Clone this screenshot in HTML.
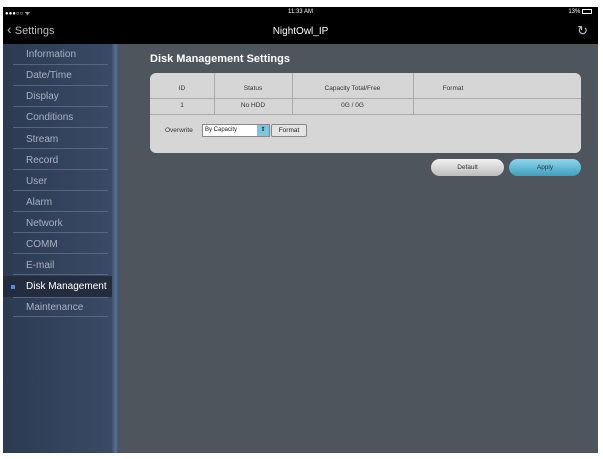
<!DOCTYPE html>
<html><head><style>
*{margin:0;padding:0;box-sizing:border-box}
body{width:603px;height:459px;background:#fff;position:relative;overflow:hidden;font-family:"Liberation Sans",sans-serif}
.a{position:absolute}
#top{left:3px;top:7px;width:595px;height:37px;background:#000;color:#fff}
#side{left:3px;top:44px;width:109px;height:409px;background:linear-gradient(90deg,#2c3a52,#34445e 60%,#3a4a66)}
#div{left:112px;top:44px;width:7px;height:409px;background:linear-gradient(90deg,#3d5070,#5a6e90,#3d5070)}
#main{left:119px;top:44px;width:479px;height:409px;background:#4f555c}
.it{position:absolute;left:23px;font-size:10px;color:#a9b1c0}
.ln{position:absolute;left:10px;width:95px;height:1px;background:#56667f}
#panel{left:150px;top:73px;width:431px;height:80px;background:#d6d6d6;border-radius:6px}
.th{position:absolute;font-size:6.5px;color:#333;text-align:center}
.btn{position:absolute;top:159px;height:17px;border-radius:9px;font-size:6.5px;text-align:center;line-height:17px;color:#333}
</style></head><body>
<div class="a" id="top">
<div class="a" style="left:2px;top:2px;font-size:6px;">●●●○○ ᯤ</div>
<div class="a" style="left:0;width:595px;top:2px;font-size:6px;text-align:center">11:33 AM</div>
<div class="a" style="right:6px;top:2px;font-size:6px;">13% <span style="display:inline-block;width:10px;height:5px;border:1px solid #fff;vertical-align:middle"></span></div>
<div class="a" style="left:4px;top:17px;font-size:11px;color:#bbb"><span style="font-size:14px;line-height:10px">‹</span> Settings</div>
<div class="a" style="left:0;width:595px;top:19px;font-size:10px;text-align:center">NightOwl_IP</div>
<div class="a" style="right:10px;top:16px;font-size:13px;color:#ccc">↻</div>
</div>
<div class="a" id="side">
<div style="position:absolute;left:0;top:232px;width:109px;height:21px;background:#232d3d"></div>
<div style="position:absolute;left:8px;top:241px;width:4px;height:4px;background:#4a8fe0"></div>
<div class="it" style="top:5px">Information</div><div class="ln" style="top:20px"></div>
<div class="it" style="top:26px">Date/Time</div><div class="ln" style="top:41px"></div>
<div class="it" style="top:47px">Display</div><div class="ln" style="top:62px"></div>
<div class="it" style="top:68px">Conditions</div><div class="ln" style="top:83px"></div>
<div class="it" style="top:90px">Stream</div><div class="ln" style="top:104px"></div>
<div class="it" style="top:111px">Record</div><div class="ln" style="top:125px"></div>
<div class="it" style="top:132px">User</div><div class="ln" style="top:146px"></div>
<div class="it" style="top:153px">Alarm</div><div class="ln" style="top:167px"></div>
<div class="it" style="top:174px">Network</div><div class="ln" style="top:188px"></div>
<div class="it" style="top:195px">COMM</div><div class="ln" style="top:209px"></div>
<div class="it" style="top:216px">E-mail</div><div class="ln" style="top:230px"></div>
<div class="it" style="top:237px;color:#fff">Disk Management</div><div class="ln" style="top:253px"></div>
<div class="it" style="top:258px">Maintenance</div><div class="ln" style="top:272px"></div>
</div>
<div class="a" id="div"></div>
<div class="a" id="main"></div>
<div class="a" style="left:150px;top:53px;font-size:11px;font-weight:bold;color:#fff">Disk Management Settings</div>
<div class="a" id="panel">
<div class="a" style="left:0;top:25px;width:431px;height:1px;background:#aaa"></div>
<div class="a" style="left:0;top:41px;width:431px;height:1px;background:#aaa"></div>
<div class="a" style="left:64px;top:0;width:1px;height:41px;background:#aaa"></div>
<div class="a" style="left:142px;top:0;width:1px;height:41px;background:#aaa"></div>
<div class="a" style="left:263px;top:0;width:1px;height:41px;background:#aaa"></div>
<div class="th" style="left:0;width:64px;top:12px">ID</div>
<div class="th" style="left:64px;width:78px;top:12px">Status</div>
<div class="th" style="left:142px;width:121px;top:12px">Capacity Total/Free</div>
<div class="th" style="left:263px;width:80px;top:12px">Format</div>
<div class="th" style="left:0;width:64px;top:29px">1</div>
<div class="th" style="left:64px;width:78px;top:29px">No HDD</div>
<div class="th" style="left:142px;width:121px;top:29px">0G / 0G</div>
<div class="th" style="left:15px;top:54px">Overwrite</div>
<div class="a" style="left:52px;top:51px;width:68px;height:13px;background:#fff;border:1px solid #888;font-size:6px;line-height:11px;padding-left:2px;color:#222">By Capacity</div>
<div class="a" style="left:107px;top:52px;width:12px;height:11px;background:#7cc6de;font-size:6px;text-align:center;line-height:11px">⇕</div>
<div class="a" style="left:121px;top:51px;width:36px;height:13px;background:#e4e4e4;border:1px solid #888;border-radius:2px;font-size:6.5px;line-height:11px;text-align:center;color:#222">Format</div>
</div>
<div class="btn" style="left:431px;width:73px;background:linear-gradient(#f2f2f2,#bcbcbc)">Default</div>
<div class="btn" style="left:509px;width:72px;background:linear-gradient(#8fd6ea,#3d9fc0)">Apply</div>
</body></html>
